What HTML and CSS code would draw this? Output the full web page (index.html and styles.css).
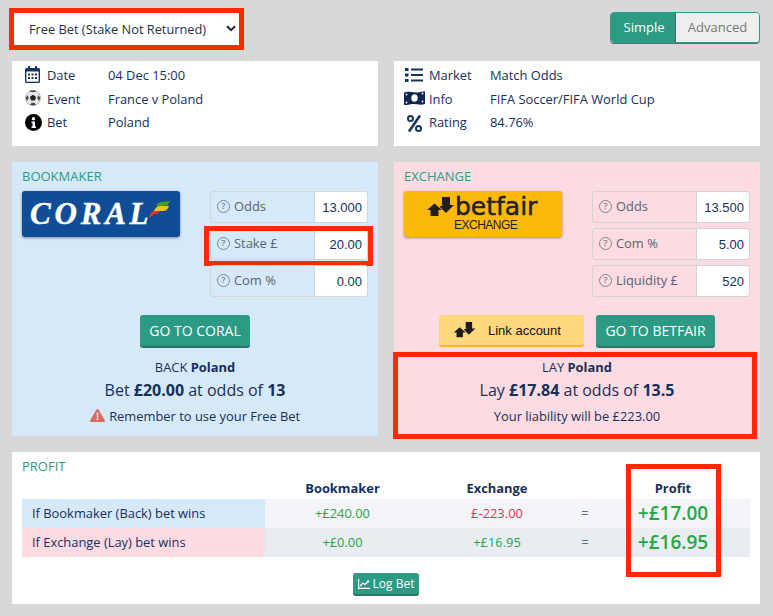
FILE: index.html
```html
<!DOCTYPE html>
<html lang="en">

<head>
    <meta charset="UTF-8">
    <meta name="viewport" content="width=device-width, initial-scale=1.0">
    <title>Free Bet Calculator</title>
    <link rel="stylesheet" href="styles.css">
</head>

<body>
    <div class="container">
        <!-- Bet type and mode -->
        <div class="top-bar">
            <div class="select-wrap">
                <select class="bet-type">
                    <option>Free Bet (Stake Not Returned)</option>
                </select>
                <svg class="select-arrow" width="10" height="7" viewBox="0 0 10 7"><path d="M1 1.200l4 4 4-4" fill="none" stroke="#1c2733" stroke-width="2"/></svg>
            </div>
            <div class="mode-toggle">
                <button class="mode-btn active">Simple</button>
                <button class="mode-btn">Advanced</button>
            </div>
        </div>

        <!-- Match details -->
        <div class="columns">
            <div class="panel info-panel">
                <div class="info-row">
                    <svg class="info-icon" width="15" height="17" viewBox="0 0 15 17"><path d="M3 0h2v2h5V0h2v2h1.500A1.500 1.500 0 0 1 15 3.500v12a1.500 1.500 0 0 1-1.500 1.500h-12A1.500 1.500 0 0 1 0 15.500v-12A1.500 1.500 0 0 1 1.500 2H3z" fill="#17345f"/><rect x="1.400" y="5.500" width="12.200" height="10.200" fill="#fff"/><path d="M3 7.500h2v2H3zM6.500 7.500h2v2h-2zM10 7.500h2v2h-2zM3 11h2v2H3zM6.500 11h2v2h-2zM10 11h2v2h-2z" fill="#17345f"/></svg>
                    <span class="info-label">Date</span>
                    <span>04 Dec 15:00</span>
                </div>
                <div class="info-row">
                    <svg class="info-icon" width="16" height="16" viewBox="0 0 17 17"><circle cx="8.500" cy="8.500" r="8" fill="#e8e8e8" stroke="#a5a5a5" stroke-width="0.800"/><path d="M8.500 5l3.300 2.400-1.300 3.800h-4L5.200 7.400z" fill="#222"/><path d="M5 1.500l3.500 1 3.500-1-1-1h-5zM.8 8l2.400-2.500.6 3.800-1.800 2.500zM16.200 8l-2.400-2.500-.6 3.800 1.800 2.500zM5.500 15.800l1.500-2.300h3l1.500 2.300-3 .8z" fill="#444"/></svg>
                    <span class="info-label">Event</span>
                    <span>France v Poland</span>
                </div>
                <div class="info-row">
                    <svg class="info-icon" width="17" height="17" viewBox="0 0 17 17"><circle cx="8.500" cy="8.500" r="8.500" fill="#000"/><circle cx="8.500" cy="4.700" r="1.700" fill="#fff"/><path d="M6.500 7.500h3.500v5h1v1.500H6.500v-1.500h1V9h-1z" fill="#fff"/></svg>
                    <span class="info-label">Bet</span>
                    <span>Poland</span>
                </div>
            </div>
            <div class="panel info-panel">
                <div class="info-row">
                    <svg class="info-icon" width="18" height="14" viewBox="0 0 18 14"><path d="M0 0h3.500v3H0zM0 5.500h3.500v3H0zM0 11h3.500v3H0zM6 .5h12v2H6zM6 6h12v2H6zM6 11.500h12v2H6z" fill="#17345f"/></svg>
                    <span class="info-label">Market</span>
                    <span>Match Odds</span>
                </div>
                <div class="info-row">
                    <svg class="info-icon" width="21" height="14" viewBox="0 0 21 14"><path d="M0 1.500c4-1.500 8 0 12 0 3 0 6-1.500 9-1v12.500c-4 1.500-8 0-12 0-3 0-6 1.500-9 1z" fill="#10274d"/><ellipse cx="10.500" cy="7" rx="3.200" ry="3.800" fill="#fff"/><circle cx="2.500" cy="3.500" r="0.900" fill="#fff"/><circle cx="18.500" cy="2.500" r="0.900" fill="#fff"/><circle cx="2.500" cy="11.500" r="0.900" fill="#fff"/><circle cx="18.500" cy="10.500" r="0.900" fill="#fff"/></svg>
                    <span class="info-label">Info</span>
                    <span>FIFA Soccer/FIFA World Cup</span>
                </div>
                <div class="info-row">
                    <svg class="info-icon" width="15" height="17" viewBox="0 0 15 17"><circle cx="3.500" cy="3.500" r="2.500" fill="none" stroke="#17345f" stroke-width="2"/><circle cx="11.500" cy="13.500" r="2.500" fill="none" stroke="#17345f" stroke-width="2"/><path d="M13 .5L2 16.500" stroke="#17345f" stroke-width="2.600"/></svg>
                    <span class="info-label">Rating</span>
                    <span>84.76%</span>
                </div>
            </div>
        </div>

        <!-- Back and lay sides -->
        <div class="columns">
            <div class="panel side back-side">
                <h3 class="panel-title">BOOKMAKER</h3>
                <div class="side-top">
                    <div class="logo logo-coral">
                        <span class="coral-name">CORAL</span>
                        <svg class="coral-flag" width="21" height="17" viewBox="0 0 21 17"><path d="M7 5C8 2 11 .5 14 1l7-1c-1 2-2 3.500-3 4.500L12 5z" fill="#4a9a3a"/><path d="M5 10c1-3 3-5 6-5h9c-1 3-3 5-6 5z" fill="#f2c21c"/><path d="M0 17c1-4 2-7 5-7h6c-1 2-3 3-6 3.500z" fill="#d8392b"/></svg>
                    </div>
                    <div class="fields">
                        <div class="field">
                            <span class="field-label"><span class="help">?</span>Odds</span>
                            <input class="field-input" value="13.000">
                        </div>
                        <div class="field field-marked">
                            <span class="field-label"><span class="help">?</span>Stake £</span>
                            <input class="field-input" value="20.00">
                        </div>
                        <div class="field">
                            <span class="field-label"><span class="help">?</span>Com %</span>
                            <input class="field-input" value="0.00">
                        </div>
                    </div>
                </div>
                <div class="actions">
                    <button class="btn">GO TO CORAL</button>
                </div>
                <div class="result">
                    <p>BACK <b>Poland</b></p>
                    <p class="result-main">Bet <b>£20.00</b> at odds of <b>13</b></p>
                    <p class="result-note">
                        <svg width="15" height="13" viewBox="0 0 15 13"><path d="M6.500.6a1.150 1.150 0 0 1 2 0l6.300 10.700a1.150 1.150 0 0 1-1 1.700H1.200a1.150 1.150 0 0 1-1-1.700z" fill="#dc6a60"/><path d="M6.700 3.500h1.600l-.2 5H6.900zM6.700 9.500h1.600v1.600H6.700z" fill="#fff"/></svg>
                        Remember to use your Free Bet
                    </p>
                </div>
            </div>
            <div class="panel side lay-side">
                <h3 class="panel-title">EXCHANGE</h3>
                <div class="side-top">
                    <div class="logo logo-betfair">
                        <div class="betfair-row">
                            <svg width="27" height="20" viewBox="0 0 27 20"><path d="M7.500 6.500L15 13h-3.500v6h-8v-6H0z" fill="#231f20"/><path d="M15 0h8v8h4l-8 8-6.500-6.500L16.500 8H15z" fill="#231f20"/></svg>
                            <span class="betfair-name">betfair</span>
                        </div>
                        <span class="betfair-sub">EXCHANGE</span>
                    </div>
                    <div class="fields">
                        <div class="field">
                            <span class="field-label"><span class="help">?</span>Odds</span>
                            <input class="field-input" value="13.500">
                        </div>
                        <div class="field">
                            <span class="field-label"><span class="help">?</span>Com %</span>
                            <input class="field-input" value="5.00">
                        </div>
                        <div class="field">
                            <span class="field-label"><span class="help">?</span>Liquidity £</span>
                            <input class="field-input" value="520">
                        </div>
                    </div>
                </div>
                <div class="actions">
                    <button class="btn btn-link">
                        <svg width="27" height="16" viewBox="0 0 27 20"><path d="M7.500 6.500L15 13h-3.500v6h-8v-6H0z" fill="#1c1c1c"/><path d="M15 0h8v8h4l-8 8-6.500-6.500L16.500 8H15z" fill="#1c1c1c"/></svg>
                        Link account
                    </button>
                    <button class="btn">GO TO BETFAIR</button>
                </div>
                <div class="result result-marked">
                    <p>LAY <b>Poland</b></p>
                    <p class="result-main">Lay <b>£17.84</b> at odds of <b>13.5</b></p>
                    <p class="result-note">Your liability will be £223.00</p>
                </div>
            </div>
        </div>

        <!-- Profit table -->
        <div class="panel profit-panel">
            <h3 class="panel-title">PROFIT</h3>
            <table class="profit-table">
                <thead>
                    <tr>
                        <th class="col-name"></th>
                        <th class="col-book">Bookmaker</th>
                        <th class="col-exch">Exchange</th>
                        <th class="col-eq"></th>
                        <th class="col-profit">Profit</th>
                    </tr>
                </thead>
                <tbody>
                    <tr>
                        <td class="row-name row-back">If Bookmaker (Back) bet wins</td>
                        <td class="plus">+£240.00</td>
                        <td class="minus">£-223.00</td>
                        <td class="equals">=</td>
                        <td class="plus total">+£17.00</td>
                    </tr>
                    <tr>
                        <td class="row-name row-lay">If Exchange (Lay) bet wins</td>
                        <td class="plus">+£0.00</td>
                        <td class="plus">+£16.95</td>
                        <td class="equals">=</td>
                        <td class="plus total">+£16.95</td>
                    </tr>
                </tbody>
            </table>
            <div class="profit-mark"></div>
            <div class="log-row">
                <button class="btn btn-small">
                    <svg width="12" height="10" viewBox="0 0 12 10"><path d="M.6 0v9.400H12" fill="none" stroke="#fff" stroke-width="1.200"/><path d="M2 7l3-3 2 1.500L10 2.500" fill="none" stroke="#fff" stroke-width="1.200"/><path d="M8.500 1.500H11v2.500z" fill="#fff"/></svg>
                    Log Bet
                </button>
            </div>
        </div>
    </div>
</body>

</html>
```

FILE: styles.css
```css
* {
    margin: 0;
    padding: 0;
    box-sizing: border-box;
}

body {
    font-family: 'Open Sans', 'Liberation Sans', sans-serif;
    font-size: 12.900px;
    color: #17305a;
    background-color: #d8d8da;
}

.container {
    width: 773px;
    height: 616px;
    padding: 8px 13px 12px 12px;
    overflow: hidden;
}

.top-bar {
    display: flex;
    justify-content: space-between;
    align-items: flex-start;
    height: 53px;
    margin-left: -3px;
}

.select-wrap {
    position: relative;
    width: 235px;
    height: 42px;
    border: 5px solid #ff2a00;
    background-color: #fff;
}

.bet-type {
    width: 100%;
    height: 100%;
    padding-left: 15px;
    border: none;
    appearance: none;
    background: #fff;
    font-family: inherit;
    font-size: 12.800px;
    color: #26323f;
}

.select-arrow {
    position: absolute;
    top: 12px;
    right: 3px;
}

.mode-toggle {
    display: flex;
    height: 31px;
    margin-top: 4px;
    border: 1px solid #2d9a84;
    border-radius: 4px;
    overflow: hidden;
    box-shadow: 0 1px 0 #53706a;
}

.mode-btn {
    border: none;
    width: 83px;
    padding-bottom: 2px;
    background-color: #eeeeee;
    font-family: inherit;
    font-size: 13px;
    color: #73787c;
}

.mode-btn.active {
    width: 65px;
    padding-left: 2px;
    background-color: #2d9a84;
    color: #fff;
    border-right: 1px solid #55606a;
}

.columns {
    display: flex;
    gap: 16px;
    margin-bottom: 16px;
}

.panel {
    position: relative;
    width: 366px;
    background-color: #fff;
}

.info-panel {
    height: 85px;
    padding-top: 2px;
}

.info-row {
    position: relative;
    display: flex;
    align-items: center;
    height: 23.500px;
    padding-left: 35px;
}

.info-row:nth-child(2) {
    height: 24px;
    padding-top: 1px;
}

.info-row:nth-child(3) {
    height: 23px;
}

.info-label {
    width: 61px;
}

.info-icon {
    position: absolute;
    left: 13px;
    top: 3px;
}

.info-panel + .info-panel .info-icon {
    left: 11px;
    top: 4px;
}

.info-panel + .info-panel .info-row:nth-child(2) .info-icon {
    left: 10px;
}

.info-panel + .info-panel .info-row:nth-child(3) .info-icon {
    left: 13px;
    top: 4px;
}

.info-panel + .info-panel .info-row:first-child .info-icon {
    top: 5px;
}

.side {
    height: 274px;
    padding: 6px 10px 0;
}

.back-side {
    background-color: #d5e9f9;
}

.lay-side {
    background-color: #fcdbe2;
}

.panel-title {
    height: 16px;
    font-size: 13px;
    font-weight: 400;
    line-height: 16px;
    color: #2d9a84;
}

.side-top {
    display: flex;
    justify-content: space-between;
    align-items: flex-start;
    margin-top: 7px;
}

.logo {
    width: 158px;
    height: 46px;
    border-radius: 3px;
    box-shadow: 0 1px 3px rgba(0, 0, 0, 0.4);
}

.logo-coral {
    display: flex;
    align-items: center;
    padding: 0 0 2px 8px;
    background-color: #0f4d96;
}

.coral-name {
    font-family: 'Liberation Serif', serif;
    font-size: 31px;
    font-style: italic;
    font-weight: 700;
    letter-spacing: 3.800px;
    line-height: 1;
    color: #fff;
    -webkit-text-stroke: 0.400px #fff;
}

.coral-flag {
    margin: -7px 0 0 -3px;
}

.logo-betfair {
    display: flex;
    flex-direction: column;
    background-color: #fdb80c;
    color: #231f20;
    padding-left: 23px;
}

.betfair-row {
    display: flex;
    align-items: flex-start;
    height: 20px;
    margin-top: 6px;
}

.betfair-name {
    margin-left: 1px;
    font-family: 'DejaVu Sans', sans-serif;
    font-size: 25px;
    line-height: 20px;
    -webkit-text-stroke: 0.500px #231f20;
}

.betfair-sub {
    margin: 3px 0 0 27px;
    font-family: 'Liberation Sans', sans-serif;
    font-size: 12px;
    letter-spacing: -0.500px;
    line-height: 11px;
}

.fields {
    display: flex;
    flex-direction: column;
    gap: 5px;
    width: 158px;
}

.field {
    position: relative;
    display: flex;
    height: 32px;
    border: 1px solid #d3d4d8;
    border-radius: 3px;
}

.field-label {
    display: flex;
    align-items: center;
    flex: 1;
    padding: 0 0 2px 6px;
    color: #5b6470;
    border-right: 1px solid #d3d4d8;
}

.field-input {
    width: 52px;
    padding-right: 5px;
    border: none;
    border-radius: 0 3px 3px 0;
    background-color: #fff;
    font-family: 'Liberation Sans', sans-serif;
    font-size: 13px;
    text-align: right;
    color: #17305a;
}

.help {
    display: inline-flex;
    align-items: center;
    justify-content: center;
    width: 13px;
    height: 13px;
    margin-right: 4px;
    border: 1.500px solid #80858c;
    border-radius: 50%;
    font-size: 9.500px;
    font-weight: 600;
    line-height: 1;
    color: #80858c;
}

/* red annotation frames */
.field-marked::after,
.result-marked::after,
.profit-mark {
    content: "";
    position: absolute;
    border: 5px solid #ff2a00;
    pointer-events: none;
}

.field-marked::after {
    top: -3px;
    right: -6px;
    bottom: -7px;
    left: -7px;
}

.actions {
    display: flex;
    justify-content: center;
    gap: 12px;
    margin-top: 18px;
}

.btn {
    height: 33px;
    padding: 0 9.500px;
    border: none;
    border-bottom: 2px solid #2a7466;
    border-radius: 3px;
    background-color: #2d9a84;
    font-family: inherit;
    font-size: 14px;
    color: #fff;
}

.btn-link {
    display: flex;
    align-items: center;
    gap: 10px;
    width: 145px;
    height: 32px;
    padding: 0 0 0 12px;
    border-bottom-color: #fdb80c;
    background-color: #fed87f;
    font-family: 'Liberation Sans', sans-serif;
    font-size: 13px;
    color: #111;
}

.result {
    position: relative;
    margin-top: 10px;
    text-align: center;
    line-height: 18px;
}

.result-main {
    margin-top: 3px;
    font-size: 16px;
    line-height: 22px;
}

.result-note {
    margin-top: 6px;
    font-size: 12.900px;
}

.result-note svg {
    margin-right: 1px;
    vertical-align: -1px;
}

.result-marked::after {
    top: -6px;
    right: -7px;
    bottom: -14px;
    left: -11px;
}

.profit-panel {
    width: 748px;
    height: 152px;
    padding: 6px 10px 0;
}

.profit-table {
    width: 728px;
    border-collapse: collapse;
    table-layout: fixed;
}

.profit-table th {
    height: 25px;
    font-weight: 700;
    vertical-align: bottom;
    padding-bottom: 2px;
}

.profit-table td {
    height: 29px;
    padding-bottom: 2px;
    text-align: center;
    background-color: #f2f4f8;
}

.profit-table tbody tr:nth-child(2) td {
    background-color: #e9edf2;
}

.col-name {
    width: 243px;
}

.col-book {
    width: 155px;
}

.col-exch {
    width: 154px;
}

.col-eq {
    width: 22px;
}

.profit-table td.row-name {
    padding-left: 10px;
    text-align: left;
}

.profit-table tbody tr td.row-back {
    background-color: #d5e9f9;
}

.profit-table tbody tr td.row-lay {
    background-color: #fcdbe2;
}

.plus {
    color: #28a745;
}

.minus {
    color: #dc3545;
}

.equals {
    color: #5b6f8c;
}

.total {
    font-size: 19px;
    font-weight: 600;
}

.profit-mark {
    top: 12px;
    left: 614px;
    width: 95px;
    height: 113px;
}

.log-row {
    display: flex;
    justify-content: center;
    margin-top: 16px;
}

.btn-small {
    display: flex;
    align-items: center;
    gap: 3px;
    height: 23px;
    padding: 0 5px;
    font-size: 12px;
}
```
